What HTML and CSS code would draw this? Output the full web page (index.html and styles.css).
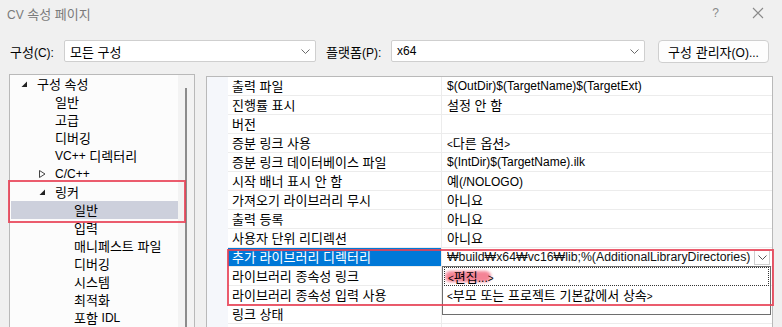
FILE: index.html
```html
<!DOCTYPE html>
<html lang="ko">
<head>
<meta charset="utf-8">
<title>CV 속성 페이지</title>
<link rel="stylesheet" href="styles.css">
</head>
<body>
<div class="win">
  <div class="titlebar">
    <span class="title"><span class="en">CV</span> 속성 페이지</span>
    <span class="tb-btns"><span class="help en">?</span><svg class="close" width="12" height="12" viewBox="0 0 12 12"><path d="M1 1L11 11M11 1L1 11" stroke="#8a8a8a" stroke-width="1.1" fill="none"/></svg></span>
  </div>
  <div class="toolbar">
    <span class="lbl">구성<span class="en">(C):</span></span>
    <div class="combo cfg"><span>모든 구성</span><svg class="chev" width="9" height="5" viewBox="0 0 9 5"><path d="M0.5 0.5L4.5 4.5L8.5 0.5" stroke="#6a6a6a" fill="none"/></svg></div>
    <span class="lbl plat">플랫폼<span class="en">(P):</span></span>
    <div class="combo pf"><span class="en">x64</span><svg class="chev" width="9" height="5" viewBox="0 0 9 5"><path d="M0.5 0.5L4.5 4.5L8.5 0.5" stroke="#6a6a6a" fill="none"/></svg></div>
    <button class="btn">구성 관리자<span class="en">(O)...</span></button>
  </div>
  <div class="main">
    <div class="tree">
      <div class="tree-items">
        <div class="ti l0"><svg class="arr" width="7" height="7" viewBox="0 0 7 7"><path d="M6 0.5V6H0.5Z" fill="#222"/></svg>구성 속성</div>
        <div class="ti l1">일반</div>
        <div class="ti l1">고급</div>
        <div class="ti l1">디버깅</div>
        <div class="ti l1"><span class="en">VC++</span>&nbsp;디렉터리</div>
        <div class="ti l1 has"><svg class="arr" width="7" height="8" viewBox="0 0 7 8"><path d="M0.5 0.5L6 4L0.5 7.5Z" fill="none" stroke="#444"/></svg><span class="en">C/C++</span></div>
        <div class="ti l1 has"><svg class="arr" width="7" height="7" viewBox="0 0 7 7"><path d="M6 0.5V6H0.5Z" fill="#222"/></svg>링커</div>
        <div class="ti l2 sel">일반</div>
        <div class="ti l2">입력</div>
        <div class="ti l2">매니페스트 파일</div>
        <div class="ti l2">디버깅</div>
        <div class="ti l2">시스템</div>
        <div class="ti l2">최적화</div>
        <div class="ti l2">포함&nbsp;<span class="en">IDL</span></div>
      </div>
      <div class="vscroll"><div class="thumb"></div></div>
      <div class="mark mark-tree"></div>
    </div>
    <div class="grid">
      <div class="row"><div class="gut"></div><div class="name">출력 파일</div><div class="val en">$(OutDir)$(TargetName)$(TargetExt)</div></div>
      <div class="row"><div class="gut"></div><div class="name">진행률 표시</div><div class="val">설정 안 함</div></div>
      <div class="row"><div class="gut"></div><div class="name">버전</div><div class="val"></div></div>
      <div class="row"><div class="gut"></div><div class="name">증분 링크 사용</div><div class="val"><span class="en sm">&lt;</span>다른 옵션<span class="en sm">&gt;</span></div></div>
      <div class="row"><div class="gut"></div><div class="name">증분 링크 데이터베이스 파일</div><div class="val en">$(IntDir)$(TargetName).ilk</div></div>
      <div class="row"><div class="gut"></div><div class="name">시작 배너 표시 안 함</div><div class="val">예<span class="en">(/NOLOGO)</span></div></div>
      <div class="row"><div class="gut"></div><div class="name">가져오기 라이브러리 무시</div><div class="val">아니요</div></div>
      <div class="row"><div class="gut"></div><div class="name">출력 등록</div><div class="val">아니요</div></div>
      <div class="row"><div class="gut"></div><div class="name">사용자 단위 리디렉션</div><div class="val">아니요</div></div>
      <div class="row selrow"><div class="gut"></div><div class="name">추가 라이브러리 디렉터리</div><div class="val edit"><span class="edit-text en">₩build₩x64₩vc16₩lib;%(AdditionalLibraryDirectories)</span><span class="ddbtn"><svg width="9" height="5" viewBox="0 0 9 5"><path d="M0.5 0.5L4.5 4.5L8.5 0.5" stroke="#555" fill="none"/></svg></span></div></div>
      <div class="row"><div class="gut"></div><div class="name">라이브러리 종속성 링크</div><div class="val"></div></div>
      <div class="row"><div class="gut"></div><div class="name">라이브러리 종속성 입력 사용</div><div class="val"></div></div>
      <div class="row"><div class="gut"></div><div class="name">링크 상태</div><div class="val"></div></div>
      <div class="row"><div class="gut"></div><div class="name"></div><div class="val"></div></div>
      <div class="popup">
        <div class="opt focus"><span class="smudge"></span><span class="opt-text"><span class="en sm">&lt;</span>편집<span class="en">...</span><span class="en sm">&gt;</span></span></div>
        <div class="opt"><span class="en sm">&lt;</span>부모 또는 프로젝트 기본값에서 상속<span class="en sm">&gt;</span></div>
      </div>
      <div class="mark mark-grid"></div>
    </div>
  </div>
</div>
</body>
</html>
```
FILE: styles.css
```css
* { box-sizing: border-box; }
html, body { margin: 0; padding: 0; }
body {
  width: 782px;
  height: 327px;
  overflow: hidden;
  background: #f0f0f0;
  font-family: "Noto Sans CJK KR", sans-serif;
  font-size: 13px;
  color: #000;
}
.en { font-family: "Liberation Sans", "Noto Sans CJK KR", sans-serif; font-size: 12px; }
.en.sm { font-size: 10px; }
.win { display: flex; flex-direction: column; height: 327px; }
.titlebar {
  flex: none;
  height: 26px;
  display: flex;
  align-items: center;
  justify-content: space-between;
  padding: 0 18px 0 7px;
}
.title { color: #7a7a7a; }
.tb-btns { display: flex; align-items: center; gap: 33px; color: #8a8a8a; }
.toolbar {
  flex: none;
  display: flex;
  align-items: center;
  height: 24px;
  margin-top: 13px;
  padding-left: 10px;
}
.lbl { width: 54px; white-space: nowrap; }
.lbl.plat { width: 65px; margin-left: 10px; }
.combo {
  height: 22px;
  background: #fff;
  border: 1px solid #cfcfcf;
  border-radius: 2px;
  display: flex;
  align-items: center;
  justify-content: space-between;
  padding: 0 5px 0 5px;
}
.combo.cfg { width: 252px; }
.combo.pf { width: 254px; }
.btn {
  margin-left: 13px;
  width: 111px;
  height: 23px;
  background: #fdfdfd;
  border: 1px solid #cfcfcf;
  border-radius: 4px;
  font: inherit;
  color: #000;
  padding: 0;
  white-space: nowrap;
}
.main {
  display: flex;
  align-items: flex-start;
  margin-top: 11px;
  padding-left: 9px;
  gap: 11px;
  flex: 1;
  min-height: 0;
  overflow: hidden;
}
.tree {
  position: relative;
  flex: none;
  width: 186px;
  height: 270px;
  background: #fcfcfc;
  border: 1px solid #b9b9b9;
  display: flex;
}
.tree-items { flex: 1; padding-left: 1px; }
.ti {
  height: 18px;
  line-height: 18px;
  display: flex;
  align-items: center;
  white-space: nowrap;
}
.ti.l0 { padding-left: 10px; }
.ti.l1 { padding-left: 44px; }
.ti.l1.has { padding-left: 28px; }
.ti.l2 { padding-left: 63px; }
.ti .arr { margin-right: 9px; flex: none; }
.ti.sel { background: #cdd0dc; }
.vscroll {
  width: 16px;
  background: #f3f3f3;
  padding-top: 13px;
  display: flex;
  justify-content: center;
}
.thumb { width: 2px; background: #8c8c8c; }
.grid {
  position: relative;
  flex: none;
  margin-top: 2px;
  width: 567px;
  height: 270px;
  background: #fff;
  border: 1px solid #b9b9b9;
}
.row { display: flex; height: 19px; }
.gut { flex: none; width: 21px; background: #f5f7fb; }
.name {
  flex: none;
  width: 214px;
  padding-left: 4px;
  line-height: 18px;
  border-bottom: 1px solid #ececec;
  border-right: 1px solid #ececec;
  white-space: nowrap;
}
.val {
  flex: 1;
  min-width: 0;
  padding-left: 5px;
  line-height: 18px;
  border-bottom: 1px solid #ececec;
  white-space: nowrap;
  overflow: hidden;
}
.selrow .name { background: #0078d7; color: #fff; }
.val.edit {
  display: flex;
  align-items: center;
  justify-content: space-between;
  padding-right: 2px;
}
.edit-text { min-width: 0; overflow: hidden; font-size: 12.3px; color: #111; }
.ddbtn {
  flex: none;
  width: 16px;
  height: 15px;
  border: 1px solid #cfcfcf;
  background: #fff;
  display: flex;
  align-items: center;
  justify-content: center;
}
.popup {
  position: absolute;
  left: 235px;
  top: 189px;
  width: 329px;
  height: 49px;
  background: #fff;
  border: 1px solid #6e6e6e;
  padding: 0 1px 0 1px;
}
.opt {
  position: relative;
  height: 19px;
  line-height: 17px;
  padding-left: 3px;
  white-space: nowrap;
  overflow: hidden;
}
.opt.focus { border: 1px dotted #333; }
.opt-text { position: relative; }
.smudge {
  position: absolute;
  left: 0;
  top: 3px;
  width: 46px;
  height: 11px;
  border-radius: 6px;
  background: rgba(240, 80, 105, 0.7);
  filter: blur(1.5px);
}
.mark {
  position: absolute;
  border: 2px solid rgba(232, 64, 84, 0.85);
  pointer-events: none;
}
.mark-tree { left: -2px; top: 105px; width: 178px; height: 43px; }
.mark-grid { left: 20px; top: 172px; width: 547px; height: 57px; }
```
